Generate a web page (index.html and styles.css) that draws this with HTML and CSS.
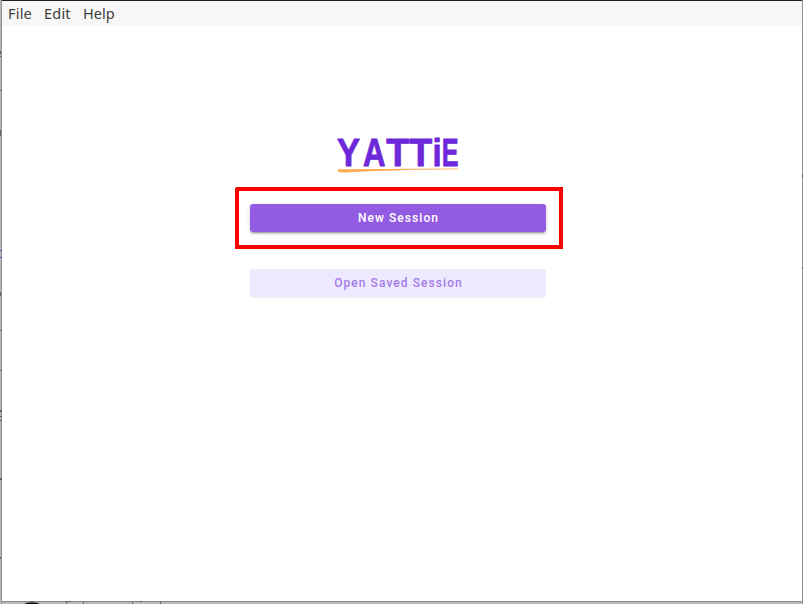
FILE: index.html
```
<!DOCTYPE html>
<html lang="en">
<head>
<meta charset="utf-8">
<title>Yattie</title>
<link rel="stylesheet" href="styles.css">
</head>
<body>
<svg class="backdrop" width="803" height="604" aria-hidden="true">
  <g fill="#59646d">
    <path d="M0 51h1v3h-1zM0 56h1v1h-1zM0 90h2v1h-2zM0 130h1v6h-1zM0 292h1v4h-1zM0 330h2v1h-2zM0 370h2v1h-2zM0 410h2v2h-2zM0 416h2v1h-2zM0 420h2v1h-2zM0 478h2v2h-2zM0 557h1v2h-1z"/>
    <path d="M66 601h5v1h-5zM66 602h1v2h-1zM83 602h1v2h-1zM132 602h1v2h-1zM140 601h2v1h-2zM160 602h1v2h-1zM802 154h1v1h-1zM802 174h1v4h-1zM802 260h1v1h-1zM802 267h1v2h-1z"/>
  </g>
  <path fill="#3158bd" d="M0 250h2v1h-2zM0 257h2v1h-2z"/>
  <ellipse cx="32" cy="604" rx="7" ry="1.7" fill="#111"/>
</svg>
<div class="window">
  <nav class="menubar"><span class="file">File</span><span class="edit">Edit</span><span class="help">Help</span></nav>
  <main class="start">
    <svg class="logo" width="122" height="38" viewBox="0 0 122 38" role="img" aria-label="YATTiE">
      <g class="wordmark">
        <text x="0" y="29" textLength="23" lengthAdjust="spacingAndGlyphs">Y</text>
        <text x="26" y="29" textLength="22.5" lengthAdjust="spacingAndGlyphs">A</text>
        <text x="49.2" y="29" textLength="23" lengthAdjust="spacingAndGlyphs">T</text>
        <text x="72.3" y="29" textLength="23" lengthAdjust="spacingAndGlyphs">T</text>
        <text x="95.4" y="29" textLength="9.2" lengthAdjust="spacingAndGlyphs">i</text>
        <text x="104.7" y="29" textLength="16.8" lengthAdjust="spacingAndGlyphs">E</text>
      </g>
      <path d="M1 32.2L121 31.4V32.3Q65 32.8 28 34.6Q2 36.2 1 34.5Z" fill="#ffab52"/>
    </svg>
    <div class="highlight"><button class="btn primary">New Session</button></div>
    <button class="btn secondary">Open Saved Session</button>
  </main>
</div>
</body>
</html>
```
FILE: styles.css
```
* { box-sizing: border-box; }
body {
  margin: 0;
  height: 604px;
  padding: 0 1px 3px 2px;
  overflow: hidden;
  background: linear-gradient(90deg, #b5b5b5 1px, #919191 1px, #919191 2px, #b9b9b9 2px, #b9b9b9 802px, #929292 802px);
}
.backdrop { position: absolute; left: 0; top: 0; z-index: 1; pointer-events: none; }
.window {
  height: 602px;
  background: #fff;
  border-top: 1px solid #231f25;
  border-bottom: 1px solid #898989;
}
.menubar {
  display: flex;
  gap: 12px;
  height: 25px;
  padding-left: 6px;
  background: #f7f7f7;
  color: #3d3d3d;
  font: 14.5px/25px "Noto Sans", sans-serif;
}
.file { width: 24px; letter-spacing: .2px; }
.edit { width: 27px; letter-spacing: .2px; }
.start { display: flex; flex-direction: column; align-items: center; padding: 111px 8px 0 0; }
.logo { display: block; overflow: visible; }
.wordmark {
  font: bold 39.6px "Liberation Sans", sans-serif;
  fill: #6d28d9;
  stroke: #6d28d9;
  stroke-width: .8px;
  stroke-linejoin: round;
}
.highlight {
  width: 328px;
  height: 62px;
  margin: 12px 0 20px 2px;
  padding: 13px 11px;
  border: 4px solid #f00;
  border-top-left-radius: 2px;
}
.btn {
  display: block;
  width: 296px;
  height: 28px;
  padding: 0 0 0 1px;
  border: 0;
  border-radius: 3px;
  font: 500 12px/28px Roboto, sans-serif;
  letter-spacing: 1.07px;
}
.primary {
  background: #915ce2;
  color: #fff;
  box-shadow: 0 3px 1px -2px rgba(0,0,0,.2), 0 2px 2px rgba(0,0,0,.14), 0 1px 5px rgba(0,0,0,.12);
}
.secondary { background: #ede9fe; color: #a77be9; box-shadow: 0 1px 2px rgba(0,0,0,.05); }
```
